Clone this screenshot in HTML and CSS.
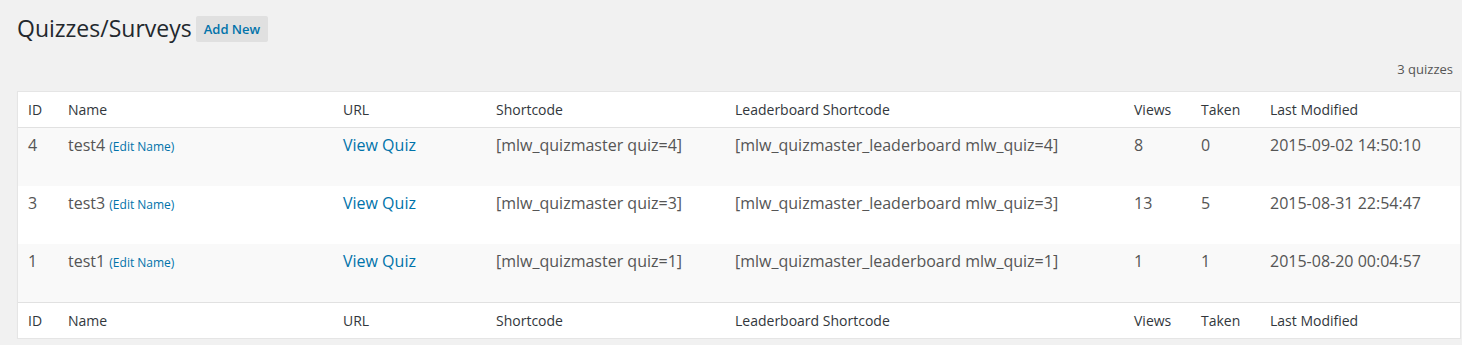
FILE: index.html
```html
<!DOCTYPE html>
<html>
<head>
<meta charset="utf-8">
<link rel="stylesheet" href="styles.css">
</head>
<body>
<div class="wrap">
  <div class="heading">
    <h1 class="title">Quizzes/Surveys</h1>
    <a class="add-new" href="#">Add New</a>
  </div>
  <div class="tablenav"><span class="count">3 quizzes</span></div>
  <table class="quizzes">
    <colgroup>
      <col class="c-id"><col class="c-name"><col class="c-url"><col class="c-short"><col class="c-lead"><col class="c-views"><col class="c-taken"><col class="c-mod">
    </colgroup>
    <thead>
      <tr><th>ID</th><th>Name</th><th>URL</th><th>Shortcode</th><th>Leaderboard Shortcode</th><th>Views</th><th>Taken</th><th>Last Modified</th></tr>
    </thead>
    <tbody>
      <tr class="alt"><td>4</td><td>test4 <a class="edit" href="#">(Edit Name)</a></td><td><a class="link" href="#">View Quiz</a></td><td>[mlw_quizmaster quiz=4]</td><td>[mlw_quizmaster_leaderboard mlw_quiz=4]</td><td>8</td><td>0</td><td>2015-09-02 14:50:10</td></tr>
      <tr><td>3</td><td>test3 <a class="edit" href="#">(Edit Name)</a></td><td><a class="link" href="#">View Quiz</a></td><td>[mlw_quizmaster quiz=3]</td><td>[mlw_quizmaster_leaderboard mlw_quiz=3]</td><td>13</td><td>5</td><td>2015-08-31 22:54:47</td></tr>
      <tr class="alt"><td>1</td><td>test1 <a class="edit" href="#">(Edit Name)</a></td><td><a class="link" href="#">View Quiz</a></td><td>[mlw_quizmaster quiz=1]</td><td>[mlw_quizmaster_leaderboard mlw_quiz=1]</td><td>1</td><td>1</td><td>2015-08-20 00:04:57</td></tr>
    </tbody>
    <tfoot>
      <tr><th>ID</th><th>Name</th><th>URL</th><th>Shortcode</th><th>Leaderboard Shortcode</th><th>Views</th><th>Taken</th><th>Last Modified</th></tr>
    </tfoot>
  </table>
</div>
</body>
</html>
```
FILE: styles.css
```css
html, body {
  margin: 0;
  padding: 0;
  background: #f1f1f1;
  font-family: "Open Sans", "Liberation Sans", sans-serif;
  color: #444;
}
.wrap {
  margin: 0 1px 0 17px;
  padding-top: 14px;
}
.heading {
  display: flex;
  align-items: flex-start;
}
.title {
  margin: 0;
  font-size: 23px;
  font-weight: 400;
  line-height: 29px;
  color: #23282d;
}
.add-new {
  margin: 2px 0 0 4px;
  padding: 4px 8px;
  background: #e0e0e0;
  color: #0073aa;
  font-size: 13px;
  font-weight: 600;
  line-height: 18px;
  text-decoration: none;
  border-radius: 2px;
}
.tablenav {
  display: flex;
  justify-content: flex-end;
  padding: 17px 8px 13px 0;
  line-height: 18px;
  font-size: 13px;
  color: #555;
}
.quizzes {
  width: 100%;
  table-layout: fixed;
  border-collapse: separate;
  border-spacing: 0;
  background: #fff;
  border: 1px solid #e5e5e5;
  box-shadow: 0 1px 1px rgba(0,0,0,0.04);
}
.c-id { width: 40px; }
.c-name { width: 275px; }
.c-url { width: 153px; }
.c-short { width: 239px; }
.c-lead { width: 399px; }
.c-views { width: 67px; }
.c-taken { width: 69px; }
.c-mod { width: 200px; }
.quizzes th {
  text-align: left;
  font-weight: 400;
  font-size: 14px;
  line-height: 19px;
  padding: 8px 10px;
  color: #32373c;
  white-space: nowrap;
}
.quizzes thead th {
  border-bottom: 1px solid #e1e1e1;
}
.quizzes tfoot th {
  border-top: 1px solid #e1e1e1;
}
.quizzes td {
  box-sizing: border-box;
  height: 58px;
  font-size: 16px;
  line-height: 21px;
  padding: 7px 10px 0;
  color: #555;
  vertical-align: top;
  white-space: nowrap;
}
.quizzes tr.alt td {
  background: #f9f9f9;
}
.edit {
  font-size: 12px;
  line-height: 1;
  color: #0073aa;
  text-decoration: none;
}
.link {
  color: #0073aa;
  text-decoration: none;
}
```
